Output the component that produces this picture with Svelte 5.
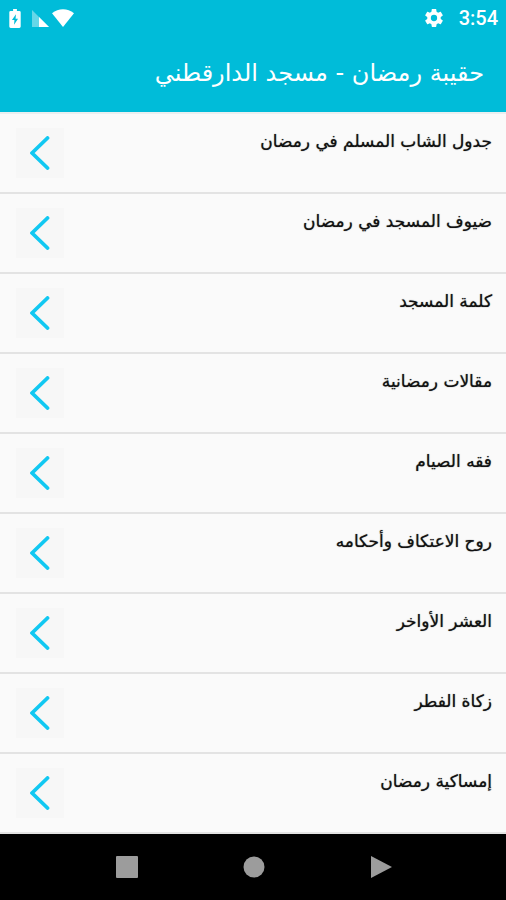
<script lang="ts">
  const topics = [
    'جدول الشاب المسلم في رمضان',
    'ضيوف المسجد في رمضان',
    'كلمة المسجد',
    'مقالات رمضانية',
    'فقه الصيام',
    'روح الاعتكاف وأحكامه',
    'العشر الأواخر',
    'زكاة الفطر',
    'إمساكية رمضان',
  ];
</script>

<div class="screen">
  <div class="status">
    <div class="group">
      <svg class="battery" viewBox="0 0 12 20" aria-hidden="true">
        <path d="M4 0h4v2h2.500q1.500 0 1.500 1.500v15q0 1.500-1.500 1.500h-9Q0 20 0 18.500v-15Q0 2 1.500 2H4z" fill="#fff" />
        <path d="M7 5.500 2.800 11.500H5.400L5 16.500 9.200 10.200H6.600z" fill="#00bcd9" />
      </svg>
      <svg class="signal" viewBox="0 0 17 17" aria-hidden="true">
        <path d="M0 0 17 17H0z" fill="#fff" opacity="0.4" />
        <path d="M7 7 17 17H7z" fill="#fff" />
      </svg>
      <svg class="wifi" viewBox="0 0 22 18" aria-hidden="true">
        <path d="M0 4.200Q5 .2 11 .2T22 4.200L11 18z" fill="#fff" />
      </svg>
    </div>
    <div class="group end">
      <svg class="gear" viewBox="2 2 20 20" aria-hidden="true">
        <path
          fill="#fff"
          fill-rule="evenodd"
          d="M19.430 12.980c.04-.32.07-.64.07-.98s-.03-.66-.07-.98l2.110-1.650c.19-.15.24-.42.12-.64l-2-3.460c-.12-.22-.39-.3-.61-.22l-2.490 1c-.52-.4-1.080-.73-1.690-.98l-.38-2.650C14.460 2.180 14.250 2 14 2h-4c-.25 0-.46.18-.49.42l-.38 2.650c-.61.25-1.170.59-1.690.98l-2.490-1c-.23-.09-.49 0-.61.22l-2 3.460c-.13.22-.07.49.12.64l2.110 1.650c-.04.32-.07.65-.07.98s.03.66.07.98l-2.110 1.650c-.19.15-.24.42-.12.64l2 3.460c.12.22.39.3.61.22l2.490-1c.52.4 1.080.73 1.690.98l.38 2.650c.03.24.24.42.49.42h4c.25 0 .46-.18.49-.42l.38-2.650c.61-.25 1.170-.59 1.690-.98l2.490 1c.23.09.49 0 .61-.22l2-3.460c.12-.22.07-.49-.12-.64zM12 15.500a3.500 3.500 0 1 1 0-7 3.500 3.500 0 0 1 0 7z"
        />
      </svg>
      <span class="time">3:54</span>
    </div>
  </div>

  <header dir="rtl">
    <h1>حقيبة رمضان - مسجد الدارقطني</h1>
  </header>

  <main dir="rtl">
    {#each topics as topic (topic)}
      <button class="row">
        <span class="label">{topic}</span>
        <span class="thumb">
          <svg viewBox="0 0 20 34" aria-hidden="true">
            <path d="M17.500 2 2 17 17.500 32" fill="none" stroke="#12c8f2" stroke-width="3.800" stroke-linecap="round" stroke-linejoin="round" />
          </svg>
        </span>
      </button>
    {/each}
  </main>

  <nav>
    <button aria-label="Recent apps">
      <svg viewBox="0 0 22 22"><rect width="22" height="22" rx="1" /></svg>
    </button>
    <button aria-label="Home">
      <svg viewBox="0 0 22 22"><circle cx="11" cy="11" r="10.500" /></svg>
    </button>
    <button aria-label="Back">
      <svg viewBox="0 0 22 22"><path d="M1 0 22 11 1 22z" /></svg>
    </button>
  </nav>
</div>

<style>
  :global(body) {
    margin: 0;
    background: #000;
  }

  .screen {
    display: flex;
    flex-direction: column;
    min-height: 100vh;
    background: #fafafa;
    font-family: 'DejaVu Sans', sans-serif;
  }

  .status {
    display: flex;
    justify-content: space-between;
    align-items: center;
    height: 36px;
    padding: 0 8px;
    background: #00bcd9;
  }

  .group {
    display: flex;
    align-items: center;
  }

  .end {
    gap: 16px;
  }

  .battery {
    width: 12px;
    height: 19px;
    margin: 0 11px 0 1px;
  }

  .signal {
    width: 17px;
    height: 17px;
    margin-right: 3px;
  }

  .wifi {
    width: 22px;
    height: 18px;
  }

  .gear {
    width: 18px;
    height: 18px;
  }

  .time {
    color: #fff;
    font: 500 20px/24px Roboto, sans-serif;
  }

  header {
    display: flex;
    align-items: center;
    height: 74px;
    padding: 0 22px 2px;
    background: #00bcd9;
    border-bottom: 2px solid #eaeff0;
  }

  h1 {
    margin: 0;
    color: #fff;
    font-size: 24px;
    font-weight: 400;
    line-height: 32px;
  }

  main {
    display: flex;
    flex-direction: column;
  }

  .row {
    display: flex;
    justify-content: space-between;
    align-items: flex-start;
    box-sizing: border-box;
    height: 80px;
    padding: 14px 14px 0 16px;
    border: 0;
    border-bottom: 2px solid #e3e3e3;
    background: #fafafa;
    color: #111;
    font-family: inherit;
    font-size: 17px;
    line-height: 26px;
    text-align: right;
    cursor: pointer;
  }

  .label {
    text-shadow: 0 0 1px #555;
  }

  .thumb {
    display: flex;
    align-items: center;
    justify-content: center;
    width: 48px;
    height: 50px;
    background: #f7f7f7;
  }

  .thumb svg {
    width: 20px;
    height: 34px;
  }

  nav {
    display: flex;
    flex: 1;
    justify-content: center;
    align-items: center;
    gap: 105px;
    padding-left: 2px;
    background: #000;
  }

  nav button {
    display: flex;
    padding: 0;
    border: 0;
    background: none;
    cursor: pointer;
  }

  nav svg {
    width: 22px;
    height: 22px;
    fill: #9c9c9c;
  }
</style>
